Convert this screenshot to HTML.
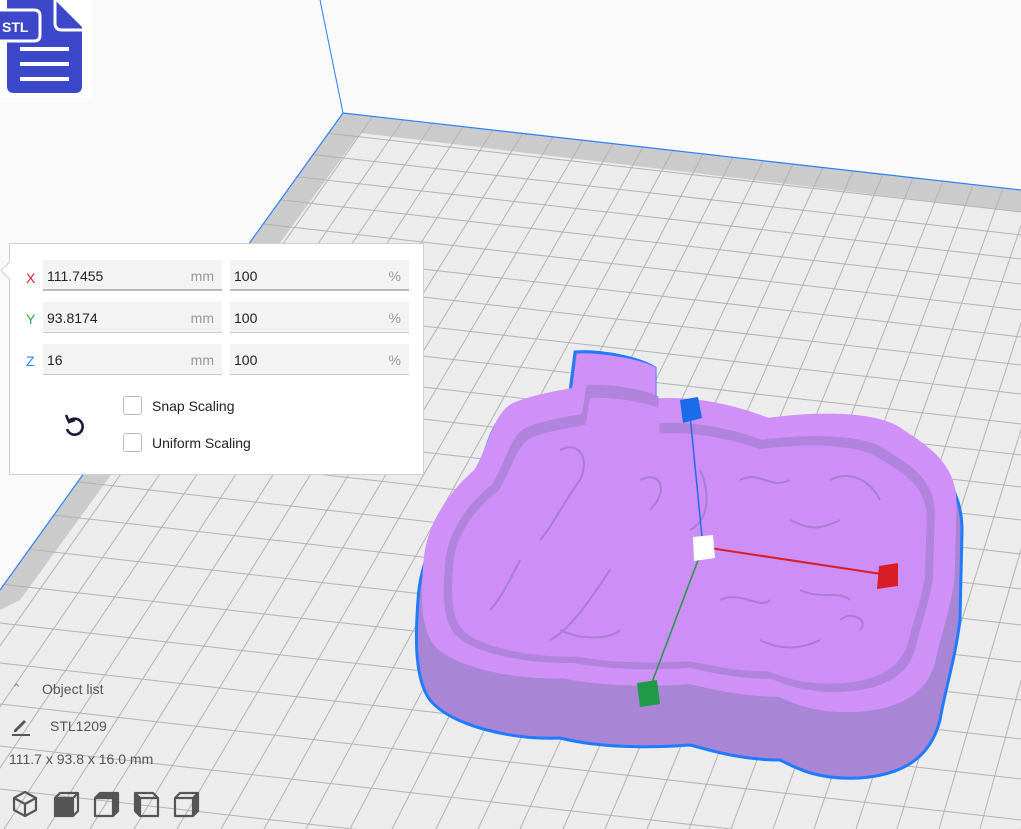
<!DOCTYPE html>
<html><head><meta charset="utf-8"><style>
html,body{margin:0;width:1021px;height:829px;overflow:hidden}
body{background:#fafafa;font-family:"Liberation Sans",sans-serif;position:relative}
svg{position:absolute;left:0;top:0}
.panel{position:absolute;left:9px;top:243px;width:415px;height:232px;background:#fff;border:1px solid #cfcfcf;box-sizing:border-box}
.lab{position:absolute;left:16px;font-size:14px}
.f{position:absolute;height:31px;background:#f3f3f3;border-bottom:1px solid #c8c8c8;box-sizing:border-box;font-size:14px;color:#222}
.f span{position:absolute;left:4px;top:8px}
.f i{position:absolute;right:8px;top:8px;font-style:normal;color:#999}
.cb{position:absolute;left:113px;width:19px;height:19px;border:1px solid #bbb;border-radius:3px;box-sizing:border-box;background:#fff}
.ct{position:absolute;left:142px;font-size:14px;color:#222}
.bl{position:absolute;color:#555;font-size:14px}
</style></head><body>
<svg width="1021" height="829" viewBox="0 0 1021 829">
<defs><clipPath id="pl"><polygon points="343,113 1021,190 1021,829 0,829 0,590"/></clipPath></defs>
<line x1="343" y1="113" x2="320" y2="0" stroke="#2a7fff" stroke-width="1"/>
<polygon points="343,113 1021,190 1021,829 0,829 0,590" fill="#ececec"/>
<g clip-path="url(#pl)">
<polygon points="343,113 1021,190 1021,212 360,133 20,600 0,610 0,590" fill="#cbcbcb"/>
<g stroke="#b3b3b3" stroke-width="1">
<line x1="373" y1="116" x2="-129" y2="829"/><line x1="403" y1="120" x2="-84" y2="829"/><line x1="433" y1="123" x2="-41" y2="829"/><line x1="463" y1="127" x2="4" y2="829"/><line x1="493" y1="130" x2="47" y2="829"/><line x1="523" y1="133" x2="90" y2="829"/><line x1="553" y1="137" x2="134" y2="829"/><line x1="583" y1="140" x2="177" y2="829"/><line x1="613" y1="144" x2="221" y2="829"/><line x1="643" y1="147" x2="264" y2="829"/><line x1="673" y1="150" x2="306" y2="829"/><line x1="703" y1="154" x2="350" y2="829"/><line x1="733" y1="157" x2="392" y2="829"/><line x1="763" y1="161" x2="436" y2="829"/><line x1="793" y1="164" x2="478" y2="829"/><line x1="823" y1="167" x2="520" y2="829"/><line x1="853" y1="171" x2="563" y2="829"/><line x1="883" y1="174" x2="605" y2="829"/><line x1="913" y1="178" x2="647" y2="829"/><line x1="943" y1="181" x2="689" y2="829"/><line x1="973" y1="185" x2="731" y2="829"/><line x1="1003" y1="188" x2="773" y2="829"/><line x1="1033" y1="191" x2="814" y2="829"/><line x1="1063" y1="195" x2="856" y2="829"/><line x1="1093" y1="198" x2="897" y2="829"/><line x1="1123" y1="202" x2="939" y2="829"/><line x1="1153" y1="205" x2="980" y2="829"/><line x1="1183" y1="209" x2="1021" y2="829"/><line x1="1213" y1="212" x2="1062" y2="829"/>
<line x1="0" y1="96" x2="1021" y2="212"/><line x1="0" y1="119" x2="1021" y2="235"/><line x1="0" y1="143" x2="1021" y2="259"/><line x1="0" y1="168" x2="1021" y2="284"/><line x1="0" y1="194" x2="1021" y2="310"/><line x1="0" y1="221" x2="1021" y2="337"/><line x1="0" y1="249" x2="1021" y2="365"/><line x1="0" y1="278" x2="1021" y2="394"/><line x1="0" y1="308" x2="1021" y2="424"/><line x1="0" y1="339" x2="1021" y2="455"/><line x1="0" y1="371" x2="1021" y2="487"/><line x1="0" y1="404" x2="1021" y2="520"/><line x1="0" y1="438" x2="1021" y2="554"/><line x1="0" y1="473" x2="1021" y2="589"/><line x1="0" y1="509" x2="1021" y2="625"/><line x1="0" y1="546" x2="1021" y2="662"/><line x1="0" y1="584" x2="1021" y2="700"/><line x1="0" y1="623" x2="1021" y2="739"/><line x1="0" y1="663" x2="1021" y2="779"/><line x1="0" y1="704" x2="1021" y2="820"/><line x1="0" y1="746" x2="1021" y2="862"/><line x1="0" y1="789" x2="1021" y2="905"/>
</g></g>
<polyline points="0,590 343,113 1021,190" fill="none" stroke="#2a7fff" stroke-width="1.2"/>
<path d="M575,352 C600,350 640,358 655,368 L655,405 C690,402 730,410 770,428 C820,420 880,420 905,440 C930,460 962,480 962,530 L960,620 C955,660 945,690 940,720 C930,760 900,775 860,778 C820,780 800,770 780,760 C740,760 710,750 690,745 C650,748 600,748 560,738 C510,740 450,725 430,700 C415,680 415,640 418,600 C420,560 440,520 470,490 C485,460 490,420 510,410 C530,400 560,395 570,392 Z" fill="#a985d6" stroke="#1f7bff" stroke-width="3"/>
<path d="M575,352 C600,350 640,358 655,368 L655,405 C690,402 730,410 770,428 C820,420 880,420 905,440 C930,460 962,480 962,530 L960,620 C955,660 945,690 940,720 C930,760 900,775 860,778 C820,780 800,770 780,760 C740,760 710,750 690,745 C650,748 600,748 560,738 C510,740 450,725 430,700 C415,680 415,640 418,600 C420,560 440,520 470,490 C485,460 490,420 510,410 C530,400 560,395 570,392 Z" fill="#cf90f8" transform="translate(690,354) scale(0.98,0.84) translate(-690,-352)"/>
<path d="M575,352 C600,350 640,358 655,368 L655,405 C690,402 730,410 770,428 C820,420 880,420 905,440 C930,460 962,480 962,530 L960,620 C955,660 945,690 940,720 C930,760 900,775 860,778 C820,780 800,770 780,760 C740,760 710,750 690,745 C650,748 600,748 560,738 C510,740 450,725 430,700 C415,680 415,640 418,600 C420,560 440,520 470,490 C485,460 490,420 510,410 C530,400 560,395 570,392 Z" fill="#b083dc" transform="translate(690,385) scale(0.9,0.72) translate(-690,-352)"/>
<path d="M575,352 C600,350 640,358 655,368 L655,405 C690,402 730,410 770,428 C820,420 880,420 905,440 C930,460 962,480 962,530 L960,620 C955,660 945,690 940,720 C930,760 900,775 860,778 C820,780 800,770 780,760 C740,760 710,750 690,745 C650,748 600,748 560,738 C510,740 450,725 430,700 C415,680 415,640 418,600 C420,560 440,520 470,490 C485,460 490,420 510,410 C530,400 560,395 570,392 Z" fill="#cd8ef7" transform="translate(690,398) scale(0.87,0.67) translate(-690,-352)"/>
<g fill="none" stroke="#a77ed3" stroke-width="2">
<path d="M560,450 c20,-10 30,10 20,30 c-15,20 -30,50 -40,60"/><path d="M640,480 c20,-10 30,10 10,30"/><path d="M700,470 c10,20 10,50 -10,60"/><path d="M740,480 c20,-10 30,10 50,0"/><path d="M790,520 c20,10 30,10 50,0"/><path d="M830,480 c20,-10 40,0 50,20"/><path d="M520,560 c-10,20 -20,40 -30,50"/><path d="M610,570 c-20,30 -40,60 -60,70"/><path d="M720,600 c20,-10 40,10 50,0"/><path d="M800,590 c20,10 40,0 50,10"/><path d="M560,630 c20,10 50,10 60,0"/><path d="M760,640 c20,10 40,10 60,0"/><path d="M840,620 c10,-10 30,0 20,10"/>
</g>
<line x1="690" y1="415" x2="703" y2="547" stroke="#1f6fe8" stroke-width="1.5"/>
<line x1="703" y1="547" x2="888" y2="575" stroke="#d81e24" stroke-width="2"/>
<line x1="703" y1="547" x2="648" y2="693" stroke="#1f9a3c" stroke-width="1.5"/>
<polygon points="680,400 698,397 702,418 683,423" fill="#1a6de8"/>
<polygon points="693,537 713,535 715,558 694,561" fill="#fff"/>
<polygon points="879,566 898,563 898,586 877,589" fill="#d81e24"/>
<polygon points="637,683 657,680 660,704 640,707" fill="#1f9a48"/>
</svg>
<div style="position:absolute;left:0;top:0;width:91px;height:98px;background:#fff"></div>
<svg width="91" height="98" viewBox="0 0 91 98">
<path d="M7,0 L55,0 L82,27 L82,86 Q82,93 75,93 L14,93 Q7,93 7,86 Z" fill="#3d47c9"/>
<path d="M55,0 L55,23 Q55,30 62,30 L82,30" fill="none" stroke="#fff" stroke-width="3"/>
<path d="M0,10 L34,10 Q40,10 40,16 L40,35 Q40,41 34,41 L0,41" fill="#3d47c9" stroke="#fff" stroke-width="3"/>
<text x="2" y="32" font-family="Liberation Sans" font-weight="bold" font-size="14" fill="#fff">STL</text>
<rect x="20" y="47" width="49" height="4" fill="#fff"/><rect x="20" y="62" width="49" height="4" fill="#fff"/><rect x="20" y="77" width="49" height="4" fill="#fff"/>
</svg>
<div class="panel">
<div style="position:absolute;left:-7px;top:20px;width:12px;height:12px;background:#fff;border-left:1px solid #cfcfcf;border-bottom:1px solid #cfcfcf;transform:rotate(45deg)"></div>
<div class="lab" style="top:26px;color:#d8232a">X</div>
<div class="lab" style="top:67px;color:#2ab13f">Y</div>
<div class="lab" style="top:109px;color:#2a7fff">Z</div>
<div class="f" style="left:33px;top:16px;width:179px;border-bottom:2px solid #bbb"><span>111.7455</span><i>mm</i></div>
<div class="f" style="left:220px;top:16px;width:179px;border-bottom:2px solid #bbb"><span>100</span><i>%</i></div>
<div class="f" style="left:33px;top:58px;width:179px"><span>93.8174</span><i>mm</i></div>
<div class="f" style="left:220px;top:58px;width:179px"><span>100</span><i>%</i></div>
<div class="f" style="left:33px;top:100px;width:179px"><span>16</span><i>mm</i></div>
<div class="f" style="left:220px;top:100px;width:179px"><span>100</span><i>%</i></div>
<svg style="left:52px;top:168px" width="26" height="28" viewBox="0 0 26 28"><path d="M7,9 A8,8 0 1 1 5,17" fill="none" stroke="#1a1a3a" stroke-width="2.6"/><path d="M4,3 L7,10 L13,8" fill="none" stroke="#1a1a3a" stroke-width="2.6"/></svg>
<div class="cb" style="top:152px"></div><div class="ct" style="top:154px">Snap Scaling</div>
<div class="cb" style="top:189px"></div><div class="ct" style="top:191px">Uniform Scaling</div>
</div>
<div class="bl" style="left:11px;top:681px;font-size:13px;color:#888">&#8963;</div>
<div class="bl" style="left:42px;top:681px">Object list</div>
<svg style="left:11px;top:716px" width="20" height="20" viewBox="0 0 20 20"><path d="M3,14 L13,4 L15,6 L5,16 L3,16 Z" fill="#555"/><rect x="1" y="18" width="18" height="2" fill="#555"/></svg>
<div class="bl" style="left:50px;top:718px">STL1209</div>
<div class="bl" style="left:9px;top:751px;font-size:14px">111.7 x 93.8 x 16.0 mm</div>
<svg style="left:12px;top:790px" width="190" height="28" viewBox="0 0 190 28">
<g fill="none" stroke="#555" stroke-width="2.2" stroke-linejoin="round">
<path d="M13,2 L24,8 L24,20 L13,26 L2,20 L2,8 Z M2,8 L13,14 L24,8 M13,14 L13,26"/>
<path d="M43,8 L48,3 L66,3 L66,21 L61,26 L43,26 Z M43,8 L61,8 L66,3 M61,8 L61,26"/>
<path d="M83,8 L88,3 L106,3 L106,21 L101,26 L83,26 Z M83,8 L101,8 L106,3 M101,8 L101,26"/>
<path d="M123,3 L141,3 L146,8 L146,26 L128,26 L123,21 Z M123,3 L128,8 L146,8 M128,8 L128,26"/>
<path d="M163,8 L168,3 L186,3 L186,21 L181,26 L163,26 Z M163,8 L181,8 L186,3 M181,8 L181,26"/>
</g>
<path d="M43,8 L61,8 L61,26 L43,26 Z" fill="#555"/><path d="M101,8 L106,3 L106,21 L101,26 Z M83,8 L88,3 L106,3 L101,8 Z" fill="#555"/>
<path d="M123,3 L128,8 L128,26 L123,21 Z" fill="#555"/><path d="M181,8 L186,3 L186,21 L181,26 Z" fill="#555"/>
</svg>
</body></html>
